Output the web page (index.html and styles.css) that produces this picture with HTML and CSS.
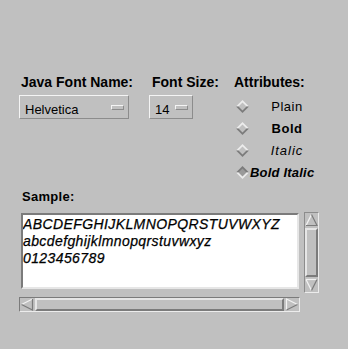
FILE: index.html
```html
<!DOCTYPE html>
<html lang="en">
<head>
  <meta charset="UTF-8" />
  <title>Java Font Chooser</title>
  <link rel="stylesheet" href="styles.css">
</head>
<body>
  <div class="dialog">
    <div class="controls">
      <div class="col col-name">
        <div class="label">Java Font Name:</div>
        <div class="choice choice-name">
          <span class="choice-text">Helvetica</span>
          <span class="choice-mark"></span>
        </div>
      </div>
      <div class="col col-size">
        <div class="label">Font Size:</div>
        <div class="choice choice-size">
          <span class="choice-text">14</span>
          <span class="choice-mark"></span>
        </div>
      </div>
      <div class="col col-attr">
        <div class="label">Attributes:</div>
        <div class="radio">
          <svg class="diamond" width="13" height="13" viewBox="0 0 13 13">
            <polygon points="6.5,0 13,6.5 0,6.5" fill="#ececec" />
            <polygon points="0,6.5 13,6.5 6.5,13" fill="#7b7b7b" />
            <polygon points="6.5,2.5 10.5,6.5 6.5,10.5 2.5,6.5" fill="#c0c0c0" />
          </svg>
          <span class="radio-text plain">Plain</span>
        </div>
        <div class="radio">
          <svg class="diamond" width="13" height="13" viewBox="0 0 13 13">
            <polygon points="6.5,0 13,6.5 0,6.5" fill="#ececec" />
            <polygon points="0,6.5 13,6.5 6.5,13" fill="#7b7b7b" />
            <polygon points="6.5,2.5 10.5,6.5 6.5,10.5 2.5,6.5" fill="#c0c0c0" />
          </svg>
          <span class="radio-text bold">Bold</span>
        </div>
        <div class="radio">
          <svg class="diamond" width="13" height="13" viewBox="0 0 13 13">
            <polygon points="6.5,0 13,6.5 0,6.5" fill="#ececec" />
            <polygon points="0,6.5 13,6.5 6.5,13" fill="#7b7b7b" />
            <polygon points="6.5,2.5 10.5,6.5 6.5,10.5 2.5,6.5" fill="#c0c0c0" />
          </svg>
          <span class="radio-text italic">Italic</span>
        </div>
        <div class="radio">
          <svg class="diamond" width="13" height="13" viewBox="0 0 13 13">
            <polygon points="6.5,0 13,6.5 0,6.5" fill="#7b7b7b" />
            <polygon points="0,6.5 13,6.5 6.5,13" fill="#ececec" />
            <polygon points="6.5,2.5 10.5,6.5 6.5,10.5 2.5,6.5" fill="#9a9a9a" />
          </svg>
          <span class="radio-text bold-italic">Bold Italic</span>
        </div>
      </div>
    </div>

    <div class="sample">
      <div class="label label-sample">Sample:</div>
      <div class="sample-row">
        <div class="sample-text">
          <div>ABCDEFGHIJKLMNOPQRSTUVWXYZ</div>
          <div>abcdefghijklmnopqrstuvwxyz</div>
          <div>0123456789</div>
        </div>
        <div class="vscroll">
          <svg class="arrow" width="13" height="14" viewBox="0 0 13 14">
            <line x1="1" y1="12.5" x2="6.5" y2="1.5" stroke="#f2f2f2" stroke-width="1.2" />
            <polyline points="6.5,1.5 12,12.5 1,12.5" fill="none" stroke="#7b7b7b" stroke-width="1.2" />
          </svg>
          <div class="thumb"></div>
          <svg class="arrow" width="13" height="14" viewBox="0 0 13 14">
            <polyline points="1,1.5 12,1.5" fill="none" stroke="#f2f2f2" stroke-width="1.2" />
            <line x1="1" y1="1.5" x2="6.5" y2="12.5" stroke="#f2f2f2" stroke-width="1.2" />
            <line x1="12" y1="1.5" x2="6.5" y2="12.5" stroke="#7b7b7b" stroke-width="1.2" />
          </svg>
        </div>
      </div>
      <div class="hscroll">
        <svg class="arrow" width="14" height="13" viewBox="0 0 14 13">
          <line x1="1.5" y1="6.5" x2="12.5" y2="1" stroke="#f2f2f2" stroke-width="1.2" />
          <polyline points="12.5,1 12.5,12 1.5,6.5" fill="none" stroke="#7b7b7b" stroke-width="1.2" />
        </svg>
        <div class="thumb"></div>
        <svg class="arrow" width="14" height="13" viewBox="0 0 14 13">
          <polyline points="1.5,12 1.5,1 12.5,6.5" fill="none" stroke="#f2f2f2" stroke-width="1.2" />
          <line x1="12.5" y1="6.5" x2="1.5" y2="12" stroke="#7b7b7b" stroke-width="1.2" />
        </svg>
      </div>
    </div>
  </div>
</body>
</html>
```

FILE: styles.css
```css
* {
  margin: 0;
  padding: 0;
  box-sizing: border-box;
}

body {
  width: 348px;
  height: 349px;
  background: #c0c0c0;
  color: #000;
  font-family: "Liberation Sans", Arial, sans-serif;
  overflow: hidden;
}

.dialog {
  padding: 74px 0 0 19px;
}

.controls {
  display: flex;
}

.label {
  font-size: 14px;
  font-weight: 700;
  line-height: 16px;
  margin-bottom: 5px;
}

.col-name {
  width: 130px;
}

.col-name .label {
  padding-left: 2px;
}

.col-size {
  width: 85px;
}

.col-size .label {
  padding-left: 3px;
}

/* option menus */
.choice {
  height: 24px;
  display: flex;
  align-items: center;
  justify-content: space-between;
  padding: 0 4px 0 5px;
  border: 1px solid;
  border-color: #f4f4f4 #8c8c8c #8c8c8c #f4f4f4;
  font-size: 13px;
}

.choice-name {
  width: 110px;
}

.choice-size {
  width: 44px;
}

.choice-text {
  line-height: 15px;
  margin-top: 5px;
}

.choice-mark {
  width: 13px;
  height: 5px;
  margin-top: 1px;
  border: 1px solid;
  border-color: #f4f4f4 #8c8c8c #8c8c8c #f4f4f4;
}

/* attribute radios */
.radio {
  display: flex;
  align-items: center;
  height: 22px;
  padding-left: 2px;
}

.diamond {
  flex-shrink: 0;
}

.radio-text {
  width: 76px;
  text-align: center;
  font-size: 13px;
  letter-spacing: 0.5px;
}

.bold {
  font-weight: 700;
}

.italic {
  font-style: italic;
  letter-spacing: 1px;
}

.bold-italic {
  width: auto;
  margin-left: 1px;
  text-align: left;
  font-weight: 700;
  font-style: italic;
  letter-spacing: 0.2px;
}

/* sample area */
.sample {
  margin-top: 6px;
}

.label-sample {
  font-size: 13px;
  line-height: 15px;
  padding-left: 3px;
  margin-bottom: 8px;
  letter-spacing: 0.3px;
}

.sample-row {
  display: flex;
  align-items: flex-start;
}

.sample-text {
  width: 278px;
  height: 76px;
  margin: 1px 5px 0 2px;
  padding-top: 1px;
  background: #fff;
  border: 2px solid;
  border-color: #7b7b7b #e6e6e6 #e6e6e6 #7b7b7b;
  font-size: 14px;
  font-style: italic;
  line-height: 17px;
  letter-spacing: 0.4px;
  -webkit-text-stroke: 0.25px #000;
  white-space: nowrap;
  overflow: hidden;
}

.vscroll {
  width: 15px;
  height: 81px;
  display: flex;
  flex-direction: column;
  align-items: center;
  border: 1px solid;
  border-color: #8c8c8c #ececec #ececec #8c8c8c;
}

.hscroll {
  width: 281px;
  height: 15px;
  margin-top: 4px;
  display: flex;
  align-items: center;
  border: 1px solid;
  border-color: #7b7b7b #ececec #ececec #7b7b7b;
}

.arrow {
  flex-shrink: 0;
}

.thumb {
  flex: 1;
  align-self: stretch;
  border: 2px solid;
  border-color: #e6e6e6 #7b7b7b #7b7b7b #e6e6e6;
}

.vscroll .thumb {
  margin: 1px 0;
}

.hscroll .thumb {
  margin: 0 1px;
}
```
